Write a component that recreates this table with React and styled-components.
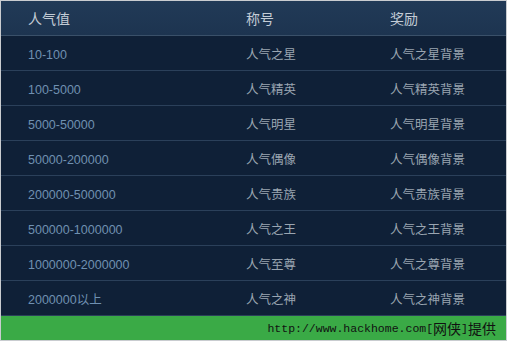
import React from 'react'
import styled, { createGlobalStyle } from 'styled-components'

const GlobalStyle = createGlobalStyle`
  html, body { margin: 0; padding: 0; background: #ffffff; }
  * { box-sizing: border-box; }
`

const Frame = styled.div`
  width: 507px;
  height: 341px;
  border: 1px solid #c9ccd0;
  display: flex;
  flex-direction: column;
  background: #0f2037;
  font-family: "Liberation Sans", "Noto Sans CJK SC", sans-serif;
`

const Row = styled.div`
  display: grid;
  grid-template-columns: 218px 144px 1fr;
  align-items: center;
  height: 35px;
  padding-left: 27px;
  background: ${p => (p.head ? 'linear-gradient(#213a57, #1d3450)' : '#0f2037')};
  border-bottom: 1px solid ${p => (p.head ? '#3a5069' : '#2b405a')};
`

const HeadCell = styled.div`
  font-family: "Noto Sans CJK SC", sans-serif;
  font-size: 14px;
  line-height: 16px;
  color: #c3ccd6;
`

const Cell = styled.div`
  font-family: ${p => (p.range ? '"Liberation Sans", ' : '')}"Noto Sans CJK SC", sans-serif;
  font-size: 12.5px;
  line-height: 14px;
  padding-top: ${p => (p.range ? '3px' : '1px')};
  color: ${p => (p.range ? '#6f90b1' : '#9aa5b1')};
`

const Footer = styled.div`
  flex: 1;
  background: #3aaa46;
  display: flex;
  align-items: center;
  justify-content: flex-end;
  padding-right: 10px;
  font-family: "Liberation Mono", monospace;
  font-size: 11.5px;
  color: #111;
`

const Han = styled.span`
  font-family: "Noto Sans CJK SC", sans-serif;
  font-size: 14px;
`

const rows = [
  ['10-100', '人气之星', '人气之星背景'],
  ['100-5000', '人气精英', '人气精英背景'],
  ['5000-50000', '人气明星', '人气明星背景'],
  ['50000-200000', '人气偶像', '人气偶像背景'],
  ['200000-500000', '人气贵族', '人气贵族背景'],
  ['500000-1000000', '人气之王', '人气之王背景'],
  ['1000000-2000000', '人气至尊', '人气之尊背景'],
  ['2000000以上', '人气之神', '人气之神背景'],
]

export default function App() {
  return (
    <>
      <GlobalStyle />
      <Frame>
        <Row head>
          <HeadCell>人气值</HeadCell>
          <HeadCell>称号</HeadCell>
          <HeadCell>奖励</HeadCell>
        </Row>
        {rows.map(([range, title, reward]) => (
          <Row key={range}>
            <Cell range>{range}</Cell>
            <Cell>{title}</Cell>
            <Cell>{reward}</Cell>
          </Row>
        ))}
        <Footer>
          http://www.hackhome.com[<Han>网侠</Han>]<Han>提供</Han>
        </Footer>
      </Frame>
    </>
  )
}
